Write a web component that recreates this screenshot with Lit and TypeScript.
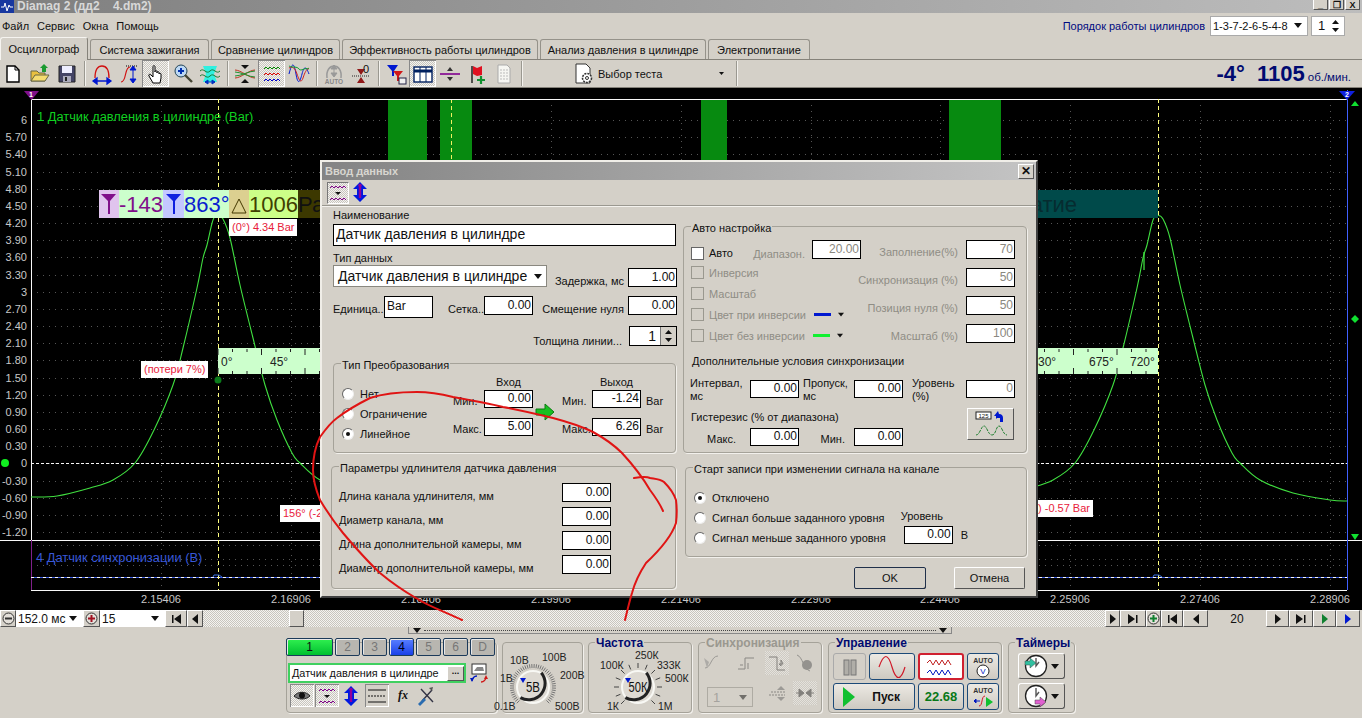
import { LitElement, css, html, svg, unsafeCSS } from 'lit';
import { customElement } from 'lit/decorators.js';

const FACE = unsafeCSS('#d4d0c8');

// shared win2k look
const win = css`
  * { box-sizing: border-box; }
  .b {
    background: ${FACE};
    border: 1px solid;
    border-color: #fff #555 #555 #fff;
    display: flex;
    align-items: center;
    justify-content: center;
    flex: none;
  }
  .dither {
    background: repeating-conic-gradient(#c8c5be 0 25%, #f4f3f0 0 50%) 0 0 / 2px 2px;
  }
  .group {
    position: relative;
    border: 1px solid #a5a299;
    border-radius: 4px;
    box-shadow: 1px 1px 0 #f2f0ec;
  }
  .legend {
    position: absolute;
    top: -5px;
    left: 7px;
    padding: 0 1px;
    background: ${FACE};
    line-height: 13px;
    white-space: nowrap;
  }
`;

const ico = (body: unknown, w = 22, h = 22) =>
  svg`<svg width=${w} height=${h} viewBox="0 0 ${w} ${h}" fill="none">${body}</svg>`;

const wave3 = svg`
  <path d="M2 5l2-2 2 2 2-2 2 2 2-2 2 2 2-2 2 2" stroke="#080"/>
  <path d="M2 11l2-2 2 2 2-2 2 2 2-2 2 2 2-2 2 2" stroke="#d00"/>
  <path d="M2 17l2-2 2 2 2-2 2 2 2-2 2 2 2-2 2 2" stroke="#00c"/>`;

const icons: Record<string, unknown> = {
  newdoc: svg`<path d="M5 3h8l4 4v12H5z" fill="#fff" stroke="#000" stroke-width="1.4"/><path d="M13 3v4h4" stroke="#000"/>`,
  open: svg`<path d="M2 18V8h6l2 2h6v8z" fill="#e8c040" stroke="#664"/><path d="M2 18l4-6h14l-4 6z" fill="#f4dc70" stroke="#664"/><path d="M13 9V5h-2l4-4 4 4h-2v4z" fill="#1a9a30"/>`,
  save: svg`<path d="M3 3h16v16H3z" fill="#446" stroke="#222"/><path d="M6 3h10v7H6z" fill="#eef"/><path d="M7 13h8v6H7z" fill="#aab"/><path d="M9 14h2v4H9z" fill="#222"/>`,
  peak: svg`<path d="M4 15C4 6 7 3 11 3s7 3 7 12" stroke="#d01010" stroke-width="1.3"/><path d="M2 18h18M2 18l4-3v6zM20 18l-4-3v6z" stroke="#0018d0" fill="#0018d0" stroke-width="1.3"/>`,
  edge: svg`<path d="M3 19c6 0 3-15 9-15" stroke="#d01010" stroke-width="1.2"/><path d="M8 3h12" stroke="#000" stroke-dasharray="1 1"/><path d="M15 4v15M15 3l-3 4h6zM15 20l-3-4h6z" stroke="#0018d0" fill="#0018d0"/>`,
  hand: svg`<path d="M8 20l-4-7c-1-2 1-2 2-1l2 2V4c0-2 2-2 2 0v5c0-2 2-2 2 0v1c0-2 2-2 2 0v1c0-1 2-1 2 0v4l-1 5z" fill="#fff" stroke="#000"/>`,
  zoom: svg`<circle cx="9" cy="8" r="6" fill="#bcd8f4" stroke="#245"/><path d="M6 8h6M9 5v6" stroke="#0030b0" stroke-width="2"/><path d="M13 12l7 7" stroke="#443" stroke-width="2.4"/>`,
  cyan: svg`<path d="M4 3h14l-3 8 3 8H4l3-8z" fill="#30f0e0"/><path d="M1 8c4-4 6 4 10 0s6 4 10 0M1 13c4-4 6 4 10 0s6 4 10 0" stroke="#187a30"/><path d="M6 19h10M6 19l3-2v4zM16 19l-3-2v4z" stroke="#0030c0" fill="#0030c0"/>`,
  cross: svg`<path d="M1 7c6 0 14 8 20 8M1 15c6 0 14-8 20-8" stroke="#c03020"/><path d="M1 9c6 0 14 5 20 5M1 13c6 0 14-5 20-5" stroke="#209030"/><path d="M7 2h8l-4 4zM7 20h8l-4-4z" fill="#111"/>`,
  waves: ico(wave3, 20, 20),
  multi: svg`<path d="M1 11c3-12 5-12 7 0s4 8 6 0 4-8 7 0" stroke="#0018d0"/><path d="M1 5c4-2 6 0 8 6s4 10 6 4 3-8 6-10" stroke="#d02020"/><path d="M1 3c4 2 8 0 10 3s6-2 10 0" stroke="#10a030"/>`,
  autoBtn: svg`<path d="M4 15c-1-8 3-12 7-12s8 4 7 12" stroke="#999" stroke-width="1.5"/><path d="M11 3v10M11 2l-3 4h6zM11 14l-3-4h6z" fill="#999" stroke="#999"/><text x="11" y="21" text-anchor="middle" font-size="6.5" font-weight="700" fill="#888" font-family="Liberation Sans">AUTO</text>`,
  zero: svg`<path d="M7 6h8l-4 6zM7 20h8l-4-6z" fill="#901818"/><path d="M2 13h18" stroke="#222" stroke-dasharray="1 1"/><text x="16" y="10" text-anchor="middle" font-size="11" fill="#111" font-family="Liberation Sans">0</text>`,
  filter: svg`<path d="M2 2h11L9 8v5H7V8z" fill="#0018d0"/><path d="M8 8h10l-4 5v5h-2v-5z" fill="#d01818"/><rect x="14" y="15" width="7" height="6" fill="#eee" stroke="#224"/>`,
  table: svg`<rect x="2" y="4" width="18" height="15" fill="#fff" stroke="#002060" stroke-width="1.4"/><path d="M2 8h18" stroke="#002060" stroke-width="3"/><path d="M8 4v15M14 4v15" stroke="#002060"/>`,
  line: svg`<path d="M1 11h20" stroke="#800090" stroke-width="1.6"/><path d="M8 8h6l-3-4zM8 14h6l-3 4z" fill="#333"/>`,
  flag: svg`<path d="M6 3v17" stroke="#222" stroke-width="1.5"/><path d="M7 3l4 2 5-2v9l-5 1-4-2z" fill="#e01020"/><path d="M11 17h8M15 13v8" stroke="#109030" stroke-width="2.2"/>`,
  list: svg`<path d="M5 2h9l3 3v15H5z" fill="#f6f6f2" stroke="#aaa"/><path d="M7 7h8M7 10h8M7 13h8M7 16h8" stroke="#bbb" stroke-dasharray="2 1"/>`,
  test: svg`<path d="M3 1h10l4 4v15H3z" fill="#fff" stroke="#333"/><circle cx="14" cy="15" r="4.5" fill="#fff" stroke="#333" stroke-dasharray="2 1" stroke-width="1.6"/><circle cx="14" cy="15" r="1.5" stroke="#333"/>`,
  updown: svg`<path d="M11 1l7 7h-4v6h4l-7 7-7-7h4V8H4z" fill="#0018e0"/><path d="M11 6v11" stroke="#90009a" stroke-width="2.4"/><circle cx="11" cy="4.5" r="1.8" fill="#90009a"/>`,
  eye: svg`<path d="M3 11c4-5 12-5 16 0-4 4-12 4-16 0z" fill="#777" stroke="#222"/><circle cx="11" cy="10.5" r="3" fill="#111"/>`,
  lines: svg`<path d="M2 5h18M2 17h18" stroke="#111"/><path d="M2 11h18" stroke="#111" stroke-dasharray="2 1"/>`,
  wavePurple: svg`<path d="M2 5l2-2 2 2 2-2 2 2 2-2 2 2 2-2 2 2M2 17l2-2 2 2 2-2 2 2 2-2 2 2 2-2 2 2" stroke="#80008a"/><path d="M7 9h6l-3 3z" fill="#111"/>`,
  tools: svg`<path d="M6 4l12 13M7 16L17 5" stroke="#334" stroke-width="1.4"/><path d="M3 19l6-6 2 2-6 6z" fill="#2a6cb0"/><path d="M14 3l4-1-1 4z" fill="#555"/>`,
  swap: svg`<rect x="3" y="1" width="14" height="10" fill="#fff" stroke="#333"/><path d="M5 8l3-4h6l1 4z" fill="#888"/><path d="M3 18a5 5 0 0 1 5-5" stroke="#0018c0" stroke-width="1.3"/><path d="M1 15h4l-2 4z" fill="#0018c0"/><path d="M17 14a5 5 0 0 1-5 5" stroke="#d01818" stroke-width="1.3"/><path d="M15 16h4l-2-4z" fill="#d01818"/>`,
};
const icon = (name: string) => (name === 'waves' ? icons.waves : ico(icons[name]));

// small transport glyphs for the scroll rows
const nav = (kind: string, color = '#111') => {
  const p: Record<string, string> = {
    first: 'M2 2h1.5v8H2zM11 1v10L4 6z',
    prev: 'M9 1v10L3 6z',
    next: 'M3 1v10l6-5z',
    last: 'M1 1v10l7-5zM9 2h1.5v8H9z',
  };
  return svg`<svg width="12" height="12" viewBox="0 0 12 12"><path d=${p[kind]} fill=${color}/></svg>`;
};
const round = (minus: boolean, color: string) => svg`<svg width="13" height="13" viewBox="0 0 13 13">
  <circle cx="6.5" cy="6.5" r="5.5" fill="#e4e0da" stroke="#333"/>
  <path d=${minus ? 'M3 6.5h7' : 'M3 6.5h7M6.5 3v7'} stroke=${color} stroke-width="2"/></svg>`;
const caret = svg`<svg width="8" height="5" viewBox="0 0 8 5"><path d="M0 0h8L4 5z" fill="#111"/></svg>`;
const spinArrows = svg`<svg width="9" height="14" viewBox="0 0 9 14"><path d="M1 5h7L4.5 1zM1 9h7l-3.5 4z" fill="#111"/></svg>`;

/* ---------- oscilloscope ---------- */

const LEFT = 31;
const RIGHT = 1347;
const yTicks = ['6', '5.70', '5.40', '5.10', '4.80', '4.50', '4.20', '3.90', '3.60', '3.30', '3', '2.70', '2.40', '2.10', '1.80', '1.50', '1.20', '0.90', '0.60', '0.30', '0', '-0.30', '-0.60', '-0.90', '-1.20'];
const xTicks = ['2.15406', '2.16906', '2.18406', '2.19906', '2.21406', '2.22906', '2.24406', '2.25906', '2.27406', '2.28906'];
const tickY = (i: number) => Math.round(120 + i * 17.17);
const tickX = (i: number) => Math.round(161 + i * 129.9);

const riseSide: [number, number][] = [[0, 215.5], [-5, 220], [-11, 245], [-15, 258], [-21, 288], [-35, 348], [-45, 385], [-64, 430], [-83, 463], [-105, 480], [-128, 488], [-161, 496], [-187, 497]];
const fallSide: [number, number][] = [[5, 219], [12, 238], [22, 285], [35, 338], [47, 385], [59, 420], [74, 453], [82, 463], [102, 480], [135, 493], [172, 500], [189, 501]];

function peakPath(cx: number) {
  const pts = [...riseSide].reverse().concat(fallSide).map(([dx, y]) => [cx + dx, y]);
  let d = `M${pts[0]}`;
  for (let i = 0; i < pts.length - 1; i++) {
    const [p0, p1, p2, p3] = [pts[Math.max(i - 1, 0)], pts[i], pts[i + 1], pts[Math.min(i + 2, pts.length - 1)]];
    d += `C${p1[0] + (p2[0] - p0[0]) / 6} ${p1[1] + (p2[1] - p0[1]) / 6} ${p2[0] - (p3[0] - p1[0]) / 6} ${p2[1] - (p3[1] - p1[1]) / 6} ${p2[0]} ${p2[1]}`;
  }
  return d;
}

@customElement('scope-view')
class ScopeView extends LitElement {
  static styles = css`
    :host { display: block; height: 522px; background: #000; }
    svg { display: block; font-family: 'Liberation Sans', sans-serif; }
    .crisp path { shape-rendering: crispEdges; }
    .tick { font-size: 11px; fill: #c8c8c8; }
    .note { font-size: 11px; fill: #e8203a; }
    .big { font-size: 22px; }
    .ruler { font-size: 12px; fill: #222; }
  `;

  ruler(from: number, to: number) {
    const marks = [];
    for (let x = from; x <= to; x += 14.5) {
      const long = Math.round((x - from) / 14.5) % 3 === 0;
      marks.push(svg`<path d="M${x} 349v${long ? 6 : 3}M${x} 374v-${long ? 6 : 3}" stroke="#222"/>`);
    }
    return svg`<rect x=${from} y="348" width=${to - from} height="26" fill="#ccffcc"/>${marks}`;
  }

  render() {
    return html`<svg width="1362" height="522" viewBox="0 88 1362 522">
      <g class="crisp">
        ${yTicks.map((_, i) => svg`<path d="M${LEFT} ${tickY(i)}H${RIGHT}" stroke="#555" stroke-dasharray="1 5"/>`)}
        ${[545, 559, 565].map((y) => svg`<path d="M${LEFT} ${y}H${RIGHT}" stroke="#555" stroke-dasharray="1 5"/>`)}
        ${xTicks.map((_, i) => svg`<path d="M${tickX(i)} 99V590" stroke="#555" stroke-dasharray="1 5"/>`)}
      </g>
      ${yTicks.map((t, i) => svg`<text class="tick" x="27" y=${tickY(i) + 4} text-anchor="end">${t}</text>`)}
      ${xTicks.map((t, i) => svg`<text class="tick" x=${tickX(i)} y="603" text-anchor="middle">${t}</text>`)}

      <rect x="388" y="99" width="39" height="70" fill="#078a10"/>
      <rect x="440" y="99" width="32" height="70" fill="#078a10"/>
      <rect x="701" y="99" width="26" height="70" fill="#078a10"/>
      <rect x="949" y="99" width="52" height="70" fill="#078a10"/>

      <g class="crisp">
        <path d="M451 99v70" stroke="#f0f060" stroke-dasharray="4 3"/>
        <path d="M0 540H1362M${LEFT} 99H${RIGHT}M${LEFT} 590H${RIGHT}" stroke="#f8f8f8"/>
        <path d="M${LEFT} 99V540" stroke="#f8f8f8"/>
        <path d="M${LEFT} 540V590" stroke="#80208a"/>
        <path d="M${RIGHT} 90V590" stroke="#4060ff"/>
        <path d="M${LEFT} 463H${RIGHT}" stroke="#f8f8f8" stroke-dasharray="3 2"/>
        <path d="M${LEFT} 577H${RIGHT}" stroke="#3858e0"/>
        <path d="M${LEFT} 577H${RIGHT}" stroke="#f8f8f8" stroke-dasharray="3 3"/>
        <path d="M218 99V590M1158 99V590" stroke="#ffff80" stroke-dasharray="4 3"/>
      </g>
      <path d="M213 577l1-2h5l3 2M1153 577l1-2h5l3 2" stroke="#3870e0" fill="none"/>

      <polygon points="24,91 39,91 31.5,100" fill="#80108a"/>
      <text x="31" y="97" text-anchor="middle" font-size="7" font-weight="700" fill="#fff">1</text>
      <polygon points="1339,91 1355,91 1347,100" fill="#1020e0"/>
      <text x="1347" y="97" text-anchor="middle" font-size="7" font-weight="700" fill="#fff">2</text>

      <path d=${peakPath(218)} stroke="#40e040" stroke-width="1.1" fill="none"/>
      <path d=${peakPath(1158)} stroke="#40e040" stroke-width="1.1" fill="none"/>
      <path d="M1144 252v18" stroke="#40e040" stroke-width="1.3"/>

      <text x="37" y="121" font-size="12.85" fill="#10d020">1 Датчик давления в цилиндре (Bar)</text>
      <text x="36" y="562" font-size="12.85" fill="#3858d8">4 Датчик синхронизации (В)</text>

      <rect x="99" y="190" width="20" height="28" fill="#e0c4ee"/>
      <rect x="119" y="190" width="44" height="28" fill="#ccffcc"/>
      <rect x="163" y="190" width="21" height="28" fill="#c4c8ff"/>
      <rect x="184" y="190" width="45" height="28" fill="#ccffcc"/>
      <rect x="229" y="190" width="20" height="28" fill="#dcd090"/>
      <rect x="249" y="190" width="49" height="28" fill="#ccff88"/>
      <rect x="298" y="190" width="30" height="28" fill="#3c3800"/>
      <rect x="1030" y="190" width="128" height="28" fill="#004a4a"/>
      <path d="M101 194h15l-6 7v13h-2v-13z" fill="#80108a"/>
      <path d="M166 194h15l-6 7v13h-2v-13z" fill="#1020e0"/>
      <path d="M232 213l7-14 7 14z" fill="none" stroke="#443800"/>
      <text class="big" x="119" y="212" fill="#80108a">-143</text>
      <text class="big" x="184" y="212" fill="#0a20d0">863°</text>
      <text class="big" x="249" y="212" fill="#404000">1006</text>
      <text class="big" x="298" y="212" fill="#111">Ра</text>
      <text class="big" x="1077" y="212" text-anchor="end" fill="#062c30">атие</text>

      <rect x="229" y="219" width="68" height="17" fill="#fff"/>
      <text class="note" x="232" y="231">(0°) 4.34 Bar</text>
      <rect x="141" y="361" width="67" height="17" fill="#fff"/>
      <text class="note" x="144" y="373">(потери 7%)</text>
      <rect x="280" y="505" width="50" height="17" fill="#fff"/>
      <text class="note" x="283" y="517">156° (-2</text>
      <rect x="1030" y="500" width="63" height="17" fill="#fff"/>
      <text class="note" x="1090" y="512" text-anchor="end">°) -0.57 Bar</text>

      ${this.ruler(218, 330)}
      ${this.ruler(1030, 1158)}
      <text class="ruler" x="221" y="366">0°</text>
      <text class="ruler" x="270" y="366">45°</text>
      <text class="ruler" x="1038" y="366">30°</text>
      <text class="ruler" x="1089" y="366">675°</text>
      <text class="ruler" x="1130" y="366">720°</text>

      <circle cx="218" cy="380" r="3.5" fill="#0a7a1a"/>
      <circle cx="5" cy="463" r="4" fill="#10f020"/>
      <path d="M1351 106l4-5 4 5z" fill="#10e030"/>
      <path d="M1355 315l4 4-4 4-4-4z" fill="#10e030"/>
      <path d="M1351 534h8l-4 6z" fill="#10e030"/>
    </svg>`;
  }
}

/* ---------- "Ввод данных" dialog ---------- */

@customElement('data-dialog')
class DataDialog extends LitElement {
  static styles = [
    win,
    css`
      :host {
        display: block;
        width: 718px;
        height: 438px;
        background: #d4d0c8;
        border: 2px solid;
        border-color: #f0eee8 #404040 #404040 #f0eee8;
        font: 11px 'Liberation Sans', sans-serif;
        color: #111;
      }
      .title {
        height: 18px;
        display: flex;
        align-items: center;
        justify-content: space-between;
        padding: 0 2px 0 3px;
        background: linear-gradient(90deg, #848484, #c4c4c4);
        color: #d8d6d0;
        font-weight: 700;
      }
      .close { width: 16px; height: 15px; font-weight: 700; font-size: 12px; color: #111; }
      .mini {
        height: 26px;
        padding-left: 4px;
        display: flex;
        align-items: center;
        border-bottom: 1px solid #9a9890;
        box-shadow: 0 1px 0 #f4f2ee;
      }
      .mini .press { width: 22px; height: 22px; border: 1px solid; border-color: #777 #fff #fff #777; margin-left: 1px; }
      .body {
        display: grid;
        grid-template-columns: 343px 344px;
        column-gap: 7px;
        padding: 2px 0 0 11px;
      }
      .lbl { height: 14px; line-height: 14px; white-space: nowrap; }
      .row { display: flex; align-items: flex-start; white-space: nowrap; }
      input {
        width: 49px;
        height: 19px;
        flex: none;
        border: 1px solid #000;
        background: #fff;
        padding: 0 1px 2px 2px;
        margin: 0;
        font: 12px 'Liberation Sans', sans-serif;
        color: #111;
        text-align: right;
        outline: none;
      }
      input.off { color: #8a8880; }
      .name { width: 343px; height: 22px; font-size: 14px; text-align: left; margin-top: 2px; }
      .select {
        width: 214px;
        height: 22px;
        flex: none;
        display: flex;
        align-items: center;
        justify-content: space-between;
        background: #fff;
        border: 1px solid #8a8880;
        padding: 0 4px;
        font-size: 14px;
      }
      .r { text-align: right; flex: none; line-height: 14px; }
      .spin { width: 48px; height: 20px; flex: none; border: 1px solid #000; background: #fff; display: flex; justify-content: flex-end; font-size: 14px; line-height: 18px; margin-right: -1px; margin-left: 1px; }
      .spin span { padding-right: 4px; }
      .spin .arrows { width: 16px; background: #d4d0c8; border-left: 1px solid #777; display: flex; align-items: center; justify-content: center; padding: 0; }

      .conv {
        margin-top: 17px;
        height: 90px;
        display: grid;
        grid-template-columns: 119px 31px 49px 29px 30px 49px auto;
        grid-template-rows: 26px 18px 10px 18px;
      }
      .conv input { height: 18px; }
      .head { grid-row: 1; align-self: end; text-align: center; line-height: 14px; padding-bottom: 1px; }
      .conv .m { padding-top: 5px; line-height: 13px; white-space: nowrap; }
      .conv .u { padding: 5px 0 0 5px; line-height: 13px; }
      .conv .r2 { grid-row: 2; }
      .conv .r4 { grid-row: 4; }
      .conv .c2 { grid-column: 2; }
      .conv .c3 { grid-column: 3; }
      .conv .c5 { grid-column: 5; }
      .conv .c6 { grid-column: 6; }
      .conv .c7 { grid-column: 7; }
      .radios { grid-row: 1 / 5; grid-column: 1; padding: 20px 0 0 8px; }
      .radio { display: flex; align-items: center; height: 20px; gap: 6px; white-space: nowrap; }
      .dot {
        width: 12px;
        height: 12px;
        border-radius: 50%;
        background: #fff;
        border: 1px solid;
        border-color: #666 #eee #eee #666;
        display: flex;
        align-items: center;
        justify-content: center;
        flex: none;
      }
      .dot.on::after { content: ''; width: 4px; height: 4px; border-radius: 50%; background: #111; }
      .arrow { grid-row: 2 / 5; grid-column: 4; align-self: center; margin-left: 2px; }

      .auto { margin-top: 18px; height: 227px; padding: 13px 11px 0 7px; }
      .top { display: flex; justify-content: space-between; height: 112px; }
      .colA { width: 167px; flex: none; }
      .check { display: flex; align-items: center; height: 21px; gap: 5px; white-space: nowrap; color: #8f8d85; }
      .check.first { height: 22px; width: 170px; align-items: flex-start; color: #111; }
      .check.first .box, .check.first span { margin-top: 7px; }
      .box { width: 13px; height: 13px; flex: none; border: 1px solid #9a988f; }
      .first .box { background: #fff; border-color: #666; }
      .check.first .range { margin: 7px 2px 0 auto; line-height: 14px; color: #8f8d85; }
      .swatch { width: 17px; height: 3px; margin-left: 3px; margin-right: 2px; }
      .swatch + svg { width: 6px; }
      .colB { display: grid; grid-template-columns: auto 49px; column-gap: 8px; row-gap: 9px; grid-auto-rows: 19px; color: #8f8d85; }
      .colB span { text-align: right; line-height: 14px; padding-top: 5px; white-space: nowrap; }
      .extra { margin-top: 2px; height: 14px; line-height: 14px; padding-left: 1px; }
      .sync {
        margin-top: 12px;
        margin-left: -1px;
        display: grid;
        grid-template-columns: 60px 49px 55px 49px 63px 49px;
        grid-template-rows: 22px 26px 18px;
        line-height: 13px;
      }
      .sync .two { margin-top: -3px; }
      .sync .pad4 { padding-left: 4px; }
      .sync .pad9 { padding-left: 9px; }
      .hyst { grid-column: 1 / 6; padding: 9px 0 0 1px; white-space: nowrap; }
      .shot { grid-column: 6; grid-row: 2 / 4; width: 47px; height: 32px; margin: 6px 0 0 1px; }
      .sync .end { text-align: right; padding: 5px 14px 0 0; }
      .sync input { height: 18px; }

      .ext {
        margin: 13px 0 0 -2px;
        width: 345px;
        height: 123px;
        padding: 16px 64px 0 7px;
        display: grid;
        grid-template-columns: 1fr 49px;
        grid-auto-rows: 19px;
        row-gap: 5px;
      }
      .ext span { line-height: 14px; padding-top: 6px; white-space: nowrap; }
      .rightBottom { margin-top: 13px; }
      .start { margin: 1px 0 0 2px; height: 90px; padding: 20px 0 0 8px; display: flex; }
      .start .lev { margin-left: 18px; display: grid; grid-template-columns: 49px auto; align-content: start; padding-top: 20px; }
      .start .lev .t { grid-column: 1 / 3; line-height: 14px; margin: 1px 0 3px -3px; }
      .start .lev input { height: 18px; }
      .start .lev .v { padding: 3px 0 0 8px; }
      .buttons { display: flex; justify-content: flex-end; gap: 28px; margin-top: 10px; padding-right: 2px; }
      .btn { width: 71px; height: 22px; border-radius: 2px; }
      .btn.def { width: 72px; outline: 1px solid #20304a; outline-offset: -1px; box-shadow: inset 1px 1px 0 #fff, inset -1px -1px 0 #666; border: none; }
    `,
  ];

  field(value: string, off = false, cls = '') {
    return html`<input class="${off ? 'off' : ''} ${cls}" .value=${value} readonly />`;
  }

  radio(label: string, on = false) {
    return html`<div class="radio"><span class="dot ${on ? 'on' : ''}"></span>${label}</div>`;
  }

  check(label: string, color = '') {
    return html`<div class="check">
      <span class="box"></span><span>${label}</span>
      ${color ? html`<span class="swatch" style="background:${color}"></span>${caret}` : ''}
    </div>`;
  }

  render() {
    return html`
      <div class="title">Ввод данных<div class="b close">✕</div></div>
      <div class="mini">
        <div class="press dither">${ico(icons.wavePurple, 20, 20)}</div>
        <div>${ico(icons.updown)}</div>
      </div>
      <div class="body">
        <div>
          <div class="lbl">Наименование</div>
          <input class="name" .value=${'Датчик давления в цилиндре'} readonly />
          <div class="lbl" style="margin-top:5px">Тип данных</div>
          <div class="row" style="height:22px">
            <div class="select">Датчик давления в цилиндре ${caret}</div>
            <span class="r" style="width:77px;padding-top:9px;margin-right:4px">Задержка, мс</span>
            <span style="margin-top:3px">${this.field('1.00')}</span>
          </div>
          <div class="row" style="margin-top:9px;height:22px">
            <span class="r" style="width:50px;padding-top:6px">Единица..</span>
            <input style="height:22px;text-align:left;margin-left:1px" .value=${'Bar'} readonly />
            <span class="r" style="width:51px;padding-top:6px">Сетка..</span>
            ${this.field('0.00')}
            <span class="r" style="width:91px;padding-top:6px">Смещение нуля</span>
            <span style="margin-left:4px">${this.field('0.00')}</span>
          </div>
          <div class="row" style="margin-top:8px;height:20px;justify-content:flex-end">
            <span class="r" style="padding:8px 6px 0 0">Толщина линии...</span>
            <div class="spin"><span>1</span><span class="arrows">${spinArrows}</span></div>
          </div>
          <div class="group conv">
            <div class="legend">Тип Преобразования</div>
            <div class="radios">
              ${this.radio('Нет')}${this.radio('Ограничение')}${this.radio('Линейное', true)}
            </div>
            <div class="head c3">Вход</div>
            <div class="head c6">Выход</div>
            <div class="m r2 c2">Мин.</div>${this.field('0.00', false, 'r2 c3')}
            <div class="arrow">${ico(svg`<path d="M1 6h9V1l9 8-9 8v-5H1z" fill="#18c020" stroke="#0a7a10"/>`, 20, 18)}</div>
            <div class="m r2 c5">Мин.</div>${this.field('-1.24', false, 'r2 c6')}<div class="u r2 c7">Bar</div>
            <div class="m r4 c2">Макс.</div>${this.field('5.00', false, 'r4 c3')}
            <div class="m r4 c5">Макс.</div>${this.field('6.26', false, 'r4 c6')}<div class="u r4 c7">Bar</div>
          </div>
        </div>

        <div>
          <div class="group auto">
            <div class="legend">Авто настройка</div>
            <div class="top">
              <div class="colA">
                <div class="check first">
                  <span class="box"></span><span>Авто</span>
                  <span class="range">Диапазон.</span>${this.field('20.00', true)}
                </div>
                ${this.check('Инверсия')}${this.check('Масштаб')}
                ${this.check('Цвет при инверсии', '#0018d0')}${this.check('Цвет без инверсии', '#10f030')}
              </div>
              <div class="colB">
                <span>Заполнение(%)</span>${this.field('70', true)}
                <span>Синхронизация (%)</span>${this.field('50', true)}
                <span>Позиция нуля (%)</span>${this.field('50', true)}
                <span>Масштаб (%)</span>${this.field('100', true)}
              </div>
            </div>
            <div class="extra">Дополнительные условия синхронизации</div>
            <div class="sync">
              <div class="two">Интервал,<br />мс</div>${this.field('0.00')}
              <div class="two pad4">Пропуск,<br />мс</div>${this.field('0.00')}
              <div class="two pad9">Уровень<br />(%)</div>${this.field('0', true)}
              <div class="hyst">Гистерезис (% от диапазона)</div>
              <div class="b shot">${ico(svg`
                <rect x="3" y="2" width="15" height="7" fill="#fff" stroke="#222"/>
                <text x="10.5" y="8" font-size="6" text-anchor="middle" fill="#111" font-family="Liberation Sans">125</text>
                <path d="M27 12V8h-3l-1 1V6l-2 0 4-5 1 3c3 0 4 2 4 4v4z" fill="#0018d0"/>
                <path d="M3 25c4 0 5-9 8-9s4 9 8 9 4-9 7-9 4 9 8 9" stroke="#208030" stroke-dasharray="3 1"/>`, 36, 28)}</div>
              <div class="end">Макс.</div>${this.field('0.00')}
              <div class="end" style="padding-right:9px">Мин.</div>${this.field('0.00')}
            </div>
          </div>
        </div>

        <div>
          <div class="group ext">
            <div class="legend">Параметры удлинителя датчика давления</div>
            <span>Длина канала удлинителя, мм</span>${this.field('0.00')}
            <span>Диаметр канала, мм</span>${this.field('0.00')}
            <span>Длина дополнительной камеры, мм</span>${this.field('0.00')}
            <span>Диаметр дополнительной камеры, мм</span>${this.field('0.00')}
          </div>
        </div>

        <div class="rightBottom">
          <div class="group start">
            <div class="legend">Старт записи при изменении сигнала на канале</div>
            <div>
              ${this.radio('Отключено', true)}${this.radio('Сигнал больше заданного уровня')}${this.radio('Сигнал меньше заданного уровня')}
            </div>
            <div class="lev">
              <div class="t">Уровень</div>${this.field('0.00')}<div class="v">В</div>
            </div>
          </div>
          <div class="buttons">
            <div class="b btn def">OK</div>
            <div class="b btn">Отмена</div>
          </div>
        </div>
      </div>
    `;
  }
}

/* ---------- bottom control strip ---------- */

function knob(w: number, cx: number, hatch: boolean, center: string, labels: [string, number, number][]) {
  const cy = 44;
  const pt = (a: number, r: number) => {
    const t = (a * Math.PI) / 180;
    return [cx + r * Math.cos(t), cy + r * Math.sin(t)];
  };
  const ticks = [];
  const step = hatch ? 6 : 22.5;
  for (let a = 135; a <= 405; a += step) {
    const [x1, y1] = pt(a, 19);
    const [x2, y2] = pt(a, hatch ? 23 : 24);
    ticks.push(svg`<path d="M${x1} ${y1}L${x2} ${y2}" stroke=${hatch ? '#777' : '#444'}/>`);
  }
  const [ax, ay] = pt(-60, 16.5);
  const [bx, by] = pt(140, 16.5);
  return svg`<svg width=${w} height="69" viewBox="0 0 ${w} 69" style="display:block;overflow:visible;font-family:'Liberation Sans',sans-serif">
    ${ticks}
    <circle cx=${cx} cy=${cy} r="16" fill="#dedad3" stroke="#f8f8f4" stroke-width="2"/>
    <path d="M${ax} ${ay}A16.5 16.5 0 0 1 ${bx} ${by}" stroke="#222" stroke-width="3" fill="none"/>
    <path d="M${cx - 13} ${cy - 9}h6l-3 5z" fill="#0018d0"/>
    <text x=${cx} y=${cy + 5} text-anchor="middle" font-size="14" fill="#111" textLength=${center.length * 5 + 4} lengthAdjust="spacingAndGlyphs">${center}</text>
    ${labels.map(([t, x, y]) => svg`<text x=${x} y=${y} font-size="10.5" fill="#222">${t}</text>`)}
  </svg>`;
}

@customElement('bottom-panel')
class BottomPanel extends LitElement {
  static styles = [
    win,
    css`
      :host { display: block; height: 91px; font: 11px 'Liberation Sans', sans-serif; color: #111; }
      .slider { height: 7px; margin-left: 408px; width: 544px; border: 1px solid #888; border-top: none; display: flex; align-items: center; gap: 3px; padding: 0 4px; }
      .slider i { display: block; flex: 1; height: 1px; border-bottom: 1px dotted #444; }
      .groups { display: flex; gap: 5px; padding: 8px 0 0 286px; height: 79px; }
      .group { height: 71px; flex: none; }
      .legend { font-weight: 700; color: #000a70; font-size: 12px; top: -6px; left: 6px; }
      .legend.off { color: #9a9890; }
      .chan { width: 211px; }
      .keys { display: flex; gap: 2px; margin: -5px 0 0 -1px; }
      .key { width: 25px; height: 18px; border: 1px solid #1c3a5a; border-radius: 2px; background: #b8b6b0; color: #777; display: flex; align-items: center; justify-content: center; font-size: 12px; box-shadow: inset 1px 1px 0 #e8e8e8; }
      .key.wide { width: 47px; background: linear-gradient(#30f050, #00c030); color: #111; }
      .key.blue { background: linear-gradient(#5a80ff, #1a40e8); color: #001; }
      .nameRow { display: flex; align-items: center; gap: 3px; margin: 7px 0 0 1px; }
      .nameBox { width: 178px; height: 20px; background: #fff; border: 2px solid #40d060; display: flex; align-items: center; justify-content: space-between; padding: 0 0 0 2px; font-size: 10.85px; white-space: nowrap; }
      .nameBox .b { width: 17px; height: 15px; font-size: 9px; font-weight: 700; line-height: 8px; align-items: flex-start; }
      .iconRow { display: flex; align-items: center; margin: 1px 0 0 3px; gap: 1px; }
      .iconRow > div { width: 24px; height: 23px; display: flex; align-items: center; justify-content: center; }
      .iconRow .press { box-shadow: inset 1px 1px 0 #888, inset -1px -1px 0 #fff; }
      .iconRow .up { margin-left: -1px; }
      .iconRow .gap { margin-left: 1px; }
      .iconRow .fx { margin-left: 1px; font: italic 700 12px 'Liberation Serif', serif; }
      .iconRow .tool { margin-left: -2px; }
      .knob { width: 81px; }
      .freq { width: 104px; }
      .sync { width: 124px; margin-left: 1px; }
      .sync .cells { display: grid; grid-template-columns: 33px 33px 29px 28px; grid-auto-rows: 26px; row-gap: 4px; align-items: center; justify-items: center; padding-top: 7px; margin-left: -3px; opacity: 0.5; }
      .sync .combo { grid-column: 1 / 3; width: 46px; height: 20px; border: 1px solid #8a8880; display: flex; align-items: center; justify-content: space-between; padding: 0 5px; color: #777; font-size: 13px; justify-self: start; margin: 8px 0 0 11px; }
      .sync .dith { width: 24px; height: 24px; display: flex; align-items: center; justify-content: center; }
      .ctl { width: 174px; margin-left: 1px; }
      .ctl .cells { display: grid; grid-template-columns: 33px 46px 46px 32px; grid-template-rows: 27px 27px; gap: 3px; padding: 10px 0 0 4px; }
      .ctl .cell { border: 1px solid #1c4a78; border-radius: 3px; background: linear-gradient(#ece9e3, #cdc9c1); display: flex; align-items: center; justify-content: center; }
      .ctl .paused { border: 1px solid #aaa; background: none; }
      .ctl .red { border: 2px solid #d02030; background: #fff; }
      .ctl .start { grid-column: 1 / 3; font-weight: 700; font-size: 12px; justify-content: space-between; padding: 0 14px 0 4px; }
      .ctl .num { color: #087818; font-weight: 700; font-size: 13px; }
      .tim { width: 67px; margin-left: 1px; }
      .tim .cells { display: flex; flex-direction: column; gap: 4px; padding: 10px 0 0 9px; }
      .tim .cell { width: 47px; height: 26px; gap: 3px; border-radius: 3px; }
    `,
  ];

  clock(mark: string) {
    return ico(svg`
      <circle cx="12" cy="12" r="10.5" fill="#fff" stroke="#222" stroke-width="1.3"/>
      <path d="M12 4v8l3-4" stroke="#555" stroke-width="1.4" fill="none"/>
      ${mark === 'in'
        ? svg`<path d="M1 7h5V4l6 5-6 5v-3H1z" fill="#30c0a0" stroke="#444" stroke-width=".5"/>`
        : svg`<path d="M11 16h5v-3l6 5-6 5v-3h-5z" fill="#e060d0" stroke="#444" stroke-width=".5"/>`}`, 24, 24);
  }

  render() {
    return html`
      <div class="slider">${caret}<i></i>${caret}</div>
      <div class="groups">
        <div class="group chan">
          <div class="keys">
            <div class="key wide">1</div><div class="key">2</div><div class="key">3</div>
            <div class="key blue">4</div><div class="key">5</div><div class="key">6</div><div class="key">D</div>
          </div>
          <div class="nameRow">
            <div class="nameBox">Датчик давления в цилиндре<div class="b">...</div></div>
            ${ico(icons.swap, 20, 20)}
          </div>
          <div class="iconRow">
            <div class="dither press">${icon('eye')}</div>
            <div class="dither press">${ico(icons.wavePurple, 20, 20)}</div>
            <div class="up">${icon('updown')}</div>
            <div class="press gap">${ico(icons.lines)}</div>
            <div class="fx">fx</div>
            <div class="tool">${icon('tools')}</div>
          </div>
        </div>
        <div class="group knob">
          ${knob(81, 30, true, '5В', [['10В', 7, 21], ['100В', 39, 18], ['1В', -3, 39], ['200В', 57, 36], ['0.1В', -9, 67], ['500В', 52, 67]])}
        </div>
        <div class="group freq">
          <div class="legend">Частота</div>
          ${knob(104, 49, false, '50К', [['250К', 46, 16], ['100К', 11, 26], ['333К', 68, 26], ['500К', 76, 39], ['1К', 18, 67], ['1М', 69, 67]])}
        </div>
        <div class="group sync">
          <div class="legend off">Синхронизация</div>
          <div class="cells">
            ${ico(svg`<path d="M3 16c6 0 6-12 13-12" stroke="#666"/><path d="M2 6l5 4-2 6z" fill="#888"/>`)}
            ${ico(svg`<path d="M3 17h7V6h9M5 13h3M13 17V11" stroke="#444"/>`)}
            <div class="dith dither">${ico(svg`<path d="M3 5h8v13h8M15 8v6l-2-2h4z" stroke="#333"/>`)}</div>
            ${ico(svg`<path d="M3 3c6 2 6 14 13 16" stroke="#555"/><circle cx="13" cy="13" r="5" fill="#555"/>`)}
            <div class="combo">1 ${caret}</div>
            ${ico(svg`<path d="M5 10h14M3 13h16" stroke="#444" stroke-dasharray="2 1"/><path d="M11 8h8l-4-4zM11 15h8l-4 4z" fill="#666"/>`)}
            <div class="dith dither">${ico(svg`<path d="M2 11h7M20 11h-7M10 11l-5-4v8zM12 11l5-4v8z" fill="#333" stroke="#333"/>`)}</div>
          </div>
        </div>
        <div class="group ctl">
          <div class="legend">Управление</div>
          <div class="cells">
            <div class="cell paused">${ico(svg`<rect x="5" y="4" width="5" height="15" fill="#b0aea8" stroke="#777"/><rect x="12" y="4" width="5" height="15" fill="#b0aea8" stroke="#777"/>`)}</div>
            <div class="cell">${ico(svg`<path d="M3 12c5-14 9-14 13 0s9 14 13 0" stroke="#d01828" stroke-width="1.2"/>`, 32, 24)}</div>
            <div class="cell red">${ico(svg`<path d="M3 8l3-3 3 5 3-5 3 5 3-5 3 5 3-5 3 5" stroke="#c02020"/><path d="M3 18l3-3 3 5 3-5 3 5 3-5 3 5 3-5 3 5" stroke="#0018c0"/>`, 34, 24)}</div>
            <div class="cell">${ico(svg`<text x="11" y="7" text-anchor="middle" font-size="7" font-weight="700" fill="#333" font-family="Liberation Sans">AUTO</text><circle cx="11" cy="15" r="6" fill="#fff" stroke="#222"/><text x="11" y="18" text-anchor="middle" font-size="8" fill="#0018c0" font-family="Liberation Sans">V</text>`)}</div>
            <div class="cell start">${ico(svg`<path d="M5 2l12 10L5 22z" fill="#10c030"/>`, 22, 24)}<span>Пуск</span></div>
            <div class="cell num">22.68</div>
            <div class="cell">${ico(svg`<text x="11" y="7" text-anchor="middle" font-size="7" font-weight="700" fill="#333" font-family="Liberation Sans">AUTO</text><path d="M2 15h6M2 15l2-2v4z" stroke="#0018c0" fill="#0018c0"/><path d="M7 20c4 0 2-10 6-10" stroke="#d01828"/><path d="M14 11l7 5-7 5z" fill="#10c030"/>`)}</div>
          </div>
        </div>
        <div class="group tim">
          <div class="legend">Таймеры</div>
          <div class="cells">
            <div class="b cell">${this.clock('in')}${caret}</div>
            <div class="b cell">${this.clock('out')}${caret}</div>
          </div>
        </div>
      </div>
    `;
  }
}

/* ---------- main window ---------- */

const toolbar = [
  ['newdoc', 'open', 'save'],
  ['peak', 'edge', 'hand*', 'zoom', 'cyan'],
  ['cross', 'waves*', 'multi'],
  ['autoBtn', 'zero'],
  ['filter', 'table*', 'line', 'flag', 'list'],
];
const tabs: [string, number][] = [
  ['Осциллограф', 88], ['Система зажигания', 119], ['Сравнение цилиндров', 129],
  ['Эффективность работы цилиндров', 196], ['Анализ давления в цилиндре', 166], ['Электропитание', 102],
];

@customElement('app-root')
export class AppRoot extends LitElement {
  static styles = [
    win,
    css`
      :host {
        display: block;
        position: relative;
        width: 1362px;
        height: 718px;
        overflow: hidden;
        background: #d4d0c8;
        font: 11px 'Liberation Sans', sans-serif;
        color: #111;
      }
      .title {
        height: 13px;
        display: flex;
        align-items: flex-start;
        background: linear-gradient(90deg, #7f7f7f, #bdbdbd);
        color: #d8d8d8;
        font-weight: 700;
        font-size: 12px;
        line-height: 12px;
      }
      .title .cap { white-space: pre; }
      .appicon { width: 14px; height: 13px; margin-right: 3px; background: #1838a0; display: flex; align-items: center; justify-content: center; }
      .winbtns { margin-left: auto; display: flex; gap: 1px; padding-right: 2px; }
      .winbtns .b { width: 15px; height: 10px; border-top: none; font-size: 9px; line-height: 8px; color: #111; font-weight: 700; overflow: hidden; }
      .menu { height: 25px; display: flex; align-items: center; padding: 0 0 0 2px; gap: 8px; }
      .order { margin-left: auto; display: flex; align-items: center; padding-right: 17px; color: #000a80; }
      .combo { width: 98px; height: 20px; margin-left: 5px; background: #fff; border: 1px solid #aaa; display: flex; align-items: center; justify-content: space-between; padding: 0 5px 0 2px; color: #111; }
      .num { width: 34px; height: 20px; margin-left: 3px; background: #fff; border: 1px solid #aaa; display: flex; align-items: center; justify-content: space-between; padding: 0 4px 0 6px; font-size: 13px; color: #111; }
      .tabs { height: 22px; display: flex; align-items: flex-end; gap: 2px; border-bottom: 1px solid #85827a; }
      .tab { height: 20px; display: flex; align-items: center; justify-content: center; border: 1px solid #95928a; border-bottom: none; border-radius: 3px 3px 0 0; flex: none; white-space: nowrap; }
      .tab.on { height: 23px; margin-bottom: -1px; background: #d4d0c8; border-color: #f6f4f0 #85827a #d4d0c8 #f6f4f0; position: relative; }
      .tools { height: 28px; display: flex; align-items: center; margin-left: -1px; border-bottom: 1px solid #85827a; }
      .cell { width: 27px; height: 27px; display: flex; align-items: center; justify-content: center; flex: none; }
      .cell.press { box-shadow: inset 1px 1px 0 #888, inset -1px -1px 0 #fff; }
      .sep { width: 8px; height: 25px; flex: none; display: flex; justify-content: center; }
      .sep::after { content: ''; width: 1px; background: #9a9890; box-shadow: 1px 0 0 #f4f2ee; }
      .test { width: 205px; margin-left: 2px; display: flex; align-items: center; justify-content: space-between; padding: 0 8px 0 46px; flex: none; }
      .test span { display: flex; align-items: center; gap: 3px; }
      .test > svg { width: 5px; }
      .readout { margin-left: auto; padding-right: 11px; color: #000a70; display: flex; align-items: baseline; white-space: pre; font-weight: 700; font-size: 22px; }
      .readout small { font-size: 11.5px; font-weight: 400; margin-left: 3px; }
      .scroll { height: 17px; display: flex; }
      .scroll .b { height: 17px; }
      .scroll .white { background: #fff; display: flex; align-items: center; justify-content: space-between; padding: 0 6px 0 2px; font-size: 12px; flex: none; }
      .track { position: relative; flex: none; width: 902px; }
      .thumb { position: absolute; left: 86px; top: 0; width: 15px; }
      .page { width: 58px; flex: none; display: flex; align-items: center; justify-content: center; font-size: 12px; }
      .w15 { width: 15px; }
      .w16 { width: 16px; }
      .w17 { width: 17px; }
      .w22 { width: 22px; }
      .w23 { width: 23px; }
      .w24 { width: 24px; }
      .w25 { width: 25px; }
      .w26 { width: 26px; }
      data-dialog { position: absolute; left: 320px; top: 160px; }
      .ink { position: absolute; left: 0; top: 0; pointer-events: none; }
    `,
  ];

  render() {
    return html`
      <div class="title">
        <div class="appicon">${ico(svg`<path d="M1 6h3l1-4 2 8 2-6 1 2h3" stroke="#fff"/>`, 14, 12)}</div>
        <span class="cap">Diamag 2 (дд2    4.dm2)</span>
        <div class="winbtns"><div class="b">_</div><div class="b">❐</div><div class="b">X</div></div>
      </div>
      <div class="menu">
        <span>Файл</span><span>Сервис</span><span>Окна</span><span>Помощь</span>
        <div class="order">
          Порядок работы цилиндров
          <div class="combo">1-3-7-2-6-5-4-8 ${caret}</div>
          <div class="num">1 ${spinArrows}</div>
        </div>
      </div>
      <div class="tabs">
        ${tabs.map(([t, w], i) => html`<div class="tab ${i === 0 ? 'on' : ''}" style="width:${w}px">${t}</div>`)}
      </div>
      <div class="tools">
        ${toolbar.map((group, i) => html`
          ${i ? html`<div class="sep"></div>` : ''}
          ${group.map((n) => {
            const pressed = n.endsWith('*');
            return html`<div class="cell ${pressed ? 'press dither' : ''}">${icon(n.replace('*', ''))}</div>`;
          })}`)}
        <div class="sep"></div>
        <div class="test"><span>${icon('test')}Выбор теста</span>${caret}</div>
        <div class="sep"></div>
        <div class="readout">-4°  1105<small>об./мин.</small></div>
      </div>
      <scope-view></scope-view>
      <div class="scroll">
        <div class="b w16">${round(true, '#333')}</div>
        <div class="white" style="width:67px">152.0 мс ${caret}</div>
        <div class="b w17">${round(false, '#a01020')}</div>
        <div class="white" style="width:65px">15 ${caret}</div>
        <div class="b w22">${nav('first')}</div>
        <div class="b w16">${nav('prev')}</div>
        <div class="track dither"><div class="b thumb"></div></div>
        <div class="b w15">${nav('next')}</div>
        <div class="b w26">${nav('last')}</div>
        <div class="b w15">${round(false, '#108030')}</div>
        <div class="b w22">${nav('first')}</div>
        <div class="b w25">${nav('prev')}</div>
        <div class="page">20</div>
        <div class="b w23">${nav('next')}</div>
        <div class="b w24">${nav('last')}</div>
        <div class="b w23">${nav('next', '#108030')}</div>
        <div class="b w24">${nav('next', '#0018d0')}</div>
      </div>
      <bottom-panel></bottom-panel>
      <data-dialog></data-dialog>
      <svg class="ink" width="1362" height="718" fill="none" stroke="#e01414" stroke-width="2" stroke-linecap="round" stroke-linejoin="round">
        <path d="M462 620C445 612 428 606 416 598C402 590 392 583 380 573C366 560 354 546 343 533C334 522 326 510 320 500C316 490 313 480 313 470C313 455 316 445 320 437C325 430 330 423 337 418C346 411 358 404 370 398C385 393 400 392 417 392C430 392 441 394 453 397C470 400 487 403 503 407C520 410 537 414 553 418C568 422 581 426 593 432C604 438 614 445 622 453C634 466 643 478 650 490C656 498 660 504 663 511"/>
        <path d="M634 478C640 477 646 476 650 478C656 479 660 479 664 482C670 488 674 494 676 500C677 508 677 515 676 523C672 535 662 548 646 563C640 572 635 582 632 593C629 603 627 612 625 620"/>
      </svg>
    `;
  }
}
